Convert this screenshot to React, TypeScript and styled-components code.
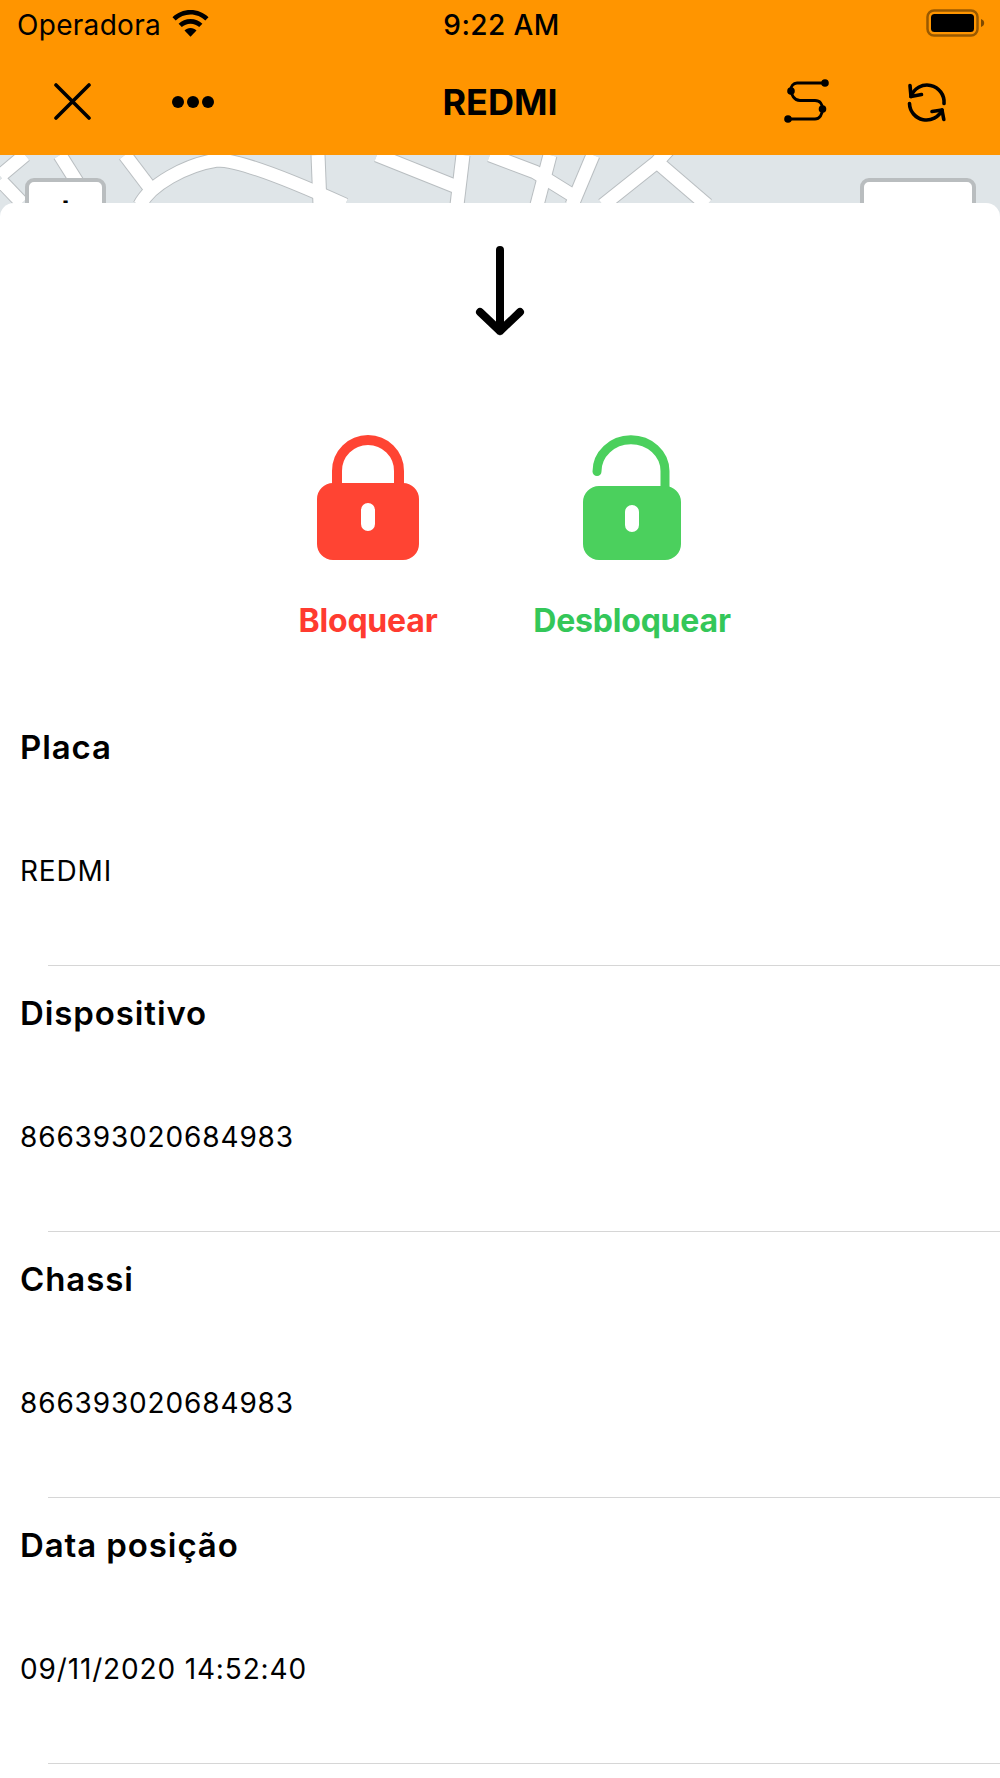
import React from 'react'
import styled, { createGlobalStyle } from 'styled-components'

const GlobalStyle = createGlobalStyle`
  html, body {
    margin: 0;
    padding: 0;
    background: #fff;
  }
  body {
    font-family: Inter, "Liberation Sans", sans-serif;
    color: #000;
  }
`

const Page = styled.div`
  width: 1000px;
  height: 1778px;
  overflow: hidden;
  background: #fff;
`

const Header = styled.header`
  height: 155px;
  background: #ff9500;
  display: flex;
  flex-direction: column;
`

const StatusBar = styled.div`
  height: 50px;
  padding: 0 14px 0 17px;
  display: grid;
  grid-template-columns: 1fr auto 1fr;
  align-items: center;
`

const Carrier = styled.div`
  display: flex;
  align-items: center;
  gap: 11px;
  font-size: 28px;
  letter-spacing: 0.3px;
  line-height: 50px;
  svg {
    margin-top: -3px;
  }
`

const Clock = styled.div`
  font-size: 28px;
  font-weight: 500;
  letter-spacing: 0.4px;
  line-height: 50px;
`

const BatteryWrap = styled.div`
  justify-self: end;
  display: flex;
  align-items: center;
  margin-top: -4px;
`

const NavBar = styled.nav`
  flex: 1;
  display: grid;
  grid-template-columns: 1fr auto 1fr;
  align-items: center;
  padding-bottom: 2px;
`

const NavGroup = styled.div<{ $end?: boolean }>`
  display: flex;
  align-items: center;
  justify-content: ${(p) => (p.$end ? 'flex-end' : 'flex-start')};
  gap: ${(p) => (p.$end ? '76px' : '80px')};
  padding: ${(p) => (p.$end ? '0 52px 0 0' : '0 0 0 54px')};
`

const Title = styled.h1`
  margin: 0;
  font-size: 36px;
  font-weight: 700;
  line-height: 40px;
`

const MapArea = styled.div`
  position: relative;
  height: 70px;
  background: #dfe5e8;
  overflow: hidden;
  svg {
    display: block;
  }
`

const ZoomButton = styled.div<{ $left: number; $width: number }>`
  position: absolute;
  top: 23px;
  left: ${(p) => p.$left}px;
  width: ${(p) => p.$width}px;
  height: 60px;
  box-sizing: border-box;
  background: #fff;
  border: 4px solid #b9bdbf;
  border-radius: 9px;
  text-align: center;
  font-size: 34px;
  line-height: 50px;
  font-weight: 700;
`

const Sheet = styled.main`
  position: relative;
  margin-top: -22px;
  background: #fff;
  border-radius: 14px 14px 0 0;
`

const SheetHeader = styled.section`
  height: 497px;
  display: flex;
  flex-direction: column;
  align-items: center;
`

const ArrowWrap = styled.div`
  margin-top: 43px;
  height: 87px;
  svg {
    display: block;
  }
`

const Actions = styled.div`
  margin-top: 102px;
  display: flex;
  justify-content: center;
`

const Action = styled.button<{ $color: string }>`
  width: 264px;
  padding: 0;
  border: 0;
  background: none;
  display: flex;
  flex-direction: column;
  align-items: center;
  font-family: inherit;
  color: ${(p) => p.$color};
  svg {
    display: block;
  }
`

const ActionLabel = styled.span`
  margin-top: 41px;
  font-size: 32px;
  font-weight: 700;
  letter-spacing: -0.2px;
  line-height: 40px;
`

const Row = styled.div`
  height: 266px;
  box-sizing: border-box;
  padding: 27px 0 0 20px;
  display: flex;
  flex-direction: column;
  position: relative;
`

const RowLabel = styled.div`
  font-size: 33px;
  font-weight: 600;
  line-height: 40px;
  letter-spacing: 0.9px;
`

const RowValue = styled.div`
  margin-top: 84px;
  font-size: 28px;
  line-height: 40px;
  letter-spacing: 0.85px;
`

const Divider = styled.hr`
  margin: auto 0 0 28px;
  border: 0;
  height: 1px;
  background: #d6d6d6;
`

const roads = [
  'M0 176L25 155',
  'M60 155L82 190',
  'M0 180L22 203',
  'M125 155L150 188',
  'M140 205C150 185 185 165 217 160C240 160 290 180 345 205',
  'M318 155L320 205',
  'M377 155L457 187',
  'M463 155L457 205',
  'M490 155L535 172L572 195',
  'M550 155L537 205',
  'M593 155L572 205',
  'M668 150L657 162L603 205',
  'M657 162L707 205',
]

const MapStrip = () => (
  <svg width="1000" height="70" viewBox="0 155 1000 70">
    <g fill="none" stroke="#b9bec1" strokeWidth="15" strokeLinejoin="round">
      {roads.map((r) => (
        <path key={r} d={r} />
      ))}
    </g>
    <g fill="none" stroke="#fff" strokeWidth="13" strokeLinejoin="round">
      {roads.map((r) => (
        <path key={r} d={r} />
      ))}
    </g>
  </svg>
)

const Wifi = () => (
  <svg width="37" height="27" viewBox="0 0 37 27">
    <path d="M18.5 0C11.5 0 5.2 2.7.5 7.2l3.2 3.4C7.6 6.9 12.8 4.6 18.5 4.6s10.9 2.3 14.8 6l3.2-3.4C31.8 2.7 25.5 0 18.5 0z" />
    <path d="M18.5 9c-4.6 0-8.8 1.8-11.9 4.7l3.2 3.4c2.3-2.1 5.3-3.4 8.7-3.4s6.4 1.3 8.7 3.4l3.2-3.4C27.3 10.8 23.1 9 18.5 9z" />
    <path d="M18.5 18c-2.4 0-4.5.9-6 2.4l6 6.4 6-6.4c-1.5-1.5-3.6-2.4-6-2.4z" />
  </svg>
)

const Battery = () => (
  <svg width="60" height="28" viewBox="0 0 60 28">
    <rect x="1.5" y="1.5" width="50" height="25" rx="6.5" fill="none" stroke="#000" strokeOpacity="0.4" strokeWidth="2.5" />
    <rect x="5" y="5" width="43" height="18" rx="3.5" />
    <path d="M55 10c2 .7 3.2 2.2 3.2 4S57 17.300 55 18z" fillOpacity="0.5" />
  </svg>
)

const CloseIcon = () => (
  <svg width="37" height="37" viewBox="0 0 37 37" stroke="#000" strokeWidth="3.6" strokeLinecap="round">
    <path d="M2 2l33 33M35 2L2 35" />
  </svg>
)

const DotsIcon = () => (
  <svg width="44" height="14" viewBox="0 0 44 14">
    <circle cx="7" cy="7" r="6" />
    <circle cx="22" cy="7" r="6" />
    <circle cx="37" cy="7" r="6" />
  </svg>
)

const RouteIcon = () => (
  <svg width="46" height="46" viewBox="0 0 46 46">
    <path
      d="M41 4H13C9 4 7 7.500 7 10.500C7 15.500 10 21.500 16 21.500H31C36 21.500 38.500 25 38.500 30C38.500 35.500 35.500 40 31 40H4"
      fill="none"
      stroke="#000"
      strokeWidth="2.800"
    />
    <circle cx="41" cy="4" r="3.800" />
    <circle cx="7" cy="12" r="3.800" />
    <circle cx="38.500" cy="30" r="3.800" />
    <circle cx="4" cy="40" r="3.800" />
  </svg>
)

const SyncIcon = () => (
  <svg width="42" height="42" viewBox="0 0 42 42" fill="none" stroke="#000" strokeWidth="3.600" strokeLinejoin="round" strokeLinecap="round">
    <path d="M5 15.500A17 17 0 0 1 38 22.500" />
    <path d="M3.500 22.500A17 17 0 0 0 36 29" />
    <path d="M4 4.500L5 15.500L15.500 13.500" />
    <path d="M37.800 38.500L36 29L26 30.500" />
  </svg>
)

const ArrowDown = () => (
  <svg width="50" height="90" viewBox="0 0 50 90" stroke="#000" strokeWidth="8" fill="none" strokeLinecap="round" strokeLinejoin="round">
    <path d="M25 4v81M5 66l20 19 20-19" />
  </svg>
)

const LockClosed = () => (
  <svg width="102" height="125" viewBox="0 0 102 125">
    <path d="M20 52V36a31 31 0 0 1 62 0v16" fill="none" stroke="#ff4433" strokeWidth="10" />
    <path
      fillRule="evenodd"
      fill="#ff4433"
      d="M16 48H86a16 16 0 0 1 16 16V109a16 16 0 0 1-16 16H16A16 16 0 0 1 0 109V64A16 16 0 0 1 16 48ZM51 68a7 7 0 0 0-7 7V89a7 7 0 0 0 14 0V75a7 7 0 0 0-7-7Z"
    />
  </svg>
)

const LockOpen = () => (
  <svg width="98" height="125" viewBox="0 0 98 125">
    <path d="M14 36.500a34 31.500 0 0 1 68-.500V56" fill="none" stroke="#4bd05d" strokeWidth="9" strokeLinecap="round" />
    <path
      fillRule="evenodd"
      fill="#4bd05d"
      d="M16 51H82a16 16 0 0 1 16 16V109a16 16 0 0 1-16 16H16A16 16 0 0 1 0 109V67A16 16 0 0 1 16 51ZM49 70a7 7 0 0 0-7 7V90a7 7 0 0 0 14 0V77a7 7 0 0 0-7-7Z"
    />
  </svg>
)

const rows = [
  { label: 'Placa', value: 'REDMI' },
  { label: 'Dispositivo', value: '866393020684983' },
  { label: 'Chassi', value: '866393020684983' },
  { label: 'Data posição', value: '09/11/2020 14:52:40' },
]

const App = () => (
  <Page>
    <GlobalStyle />
    <Header>
      <StatusBar>
        <Carrier>
          Operadora
          <Wifi />
        </Carrier>
        <Clock>9:22 AM</Clock>
        <BatteryWrap>
          <Battery />
        </BatteryWrap>
      </StatusBar>
      <NavBar>
        <NavGroup>
          <CloseIcon />
          <DotsIcon />
        </NavGroup>
        <Title>REDMI</Title>
        <NavGroup $end>
          <RouteIcon />
          <SyncIcon />
        </NavGroup>
      </NavBar>
    </Header>
    <MapArea>
      <MapStrip />
      <ZoomButton $left={25} $width={81}>+</ZoomButton>
      <ZoomButton $left={860} $width={116} />
    </MapArea>
    <Sheet>
      <SheetHeader>
        <ArrowWrap>
          <ArrowDown />
        </ArrowWrap>
        <Actions>
          <Action $color="#ff3b30">
            <LockClosed />
            <ActionLabel>Bloquear</ActionLabel>
          </Action>
          <Action $color="#34c759">
            <LockOpen />
            <ActionLabel>Desbloquear</ActionLabel>
          </Action>
        </Actions>
      </SheetHeader>
      {rows.map((r) => (
        <Row key={r.label}>
          <RowLabel>{r.label}</RowLabel>
          <RowValue>{r.value}</RowValue>
          <Divider />
        </Row>
      ))}
    </Sheet>
  </Page>
)

export default App
